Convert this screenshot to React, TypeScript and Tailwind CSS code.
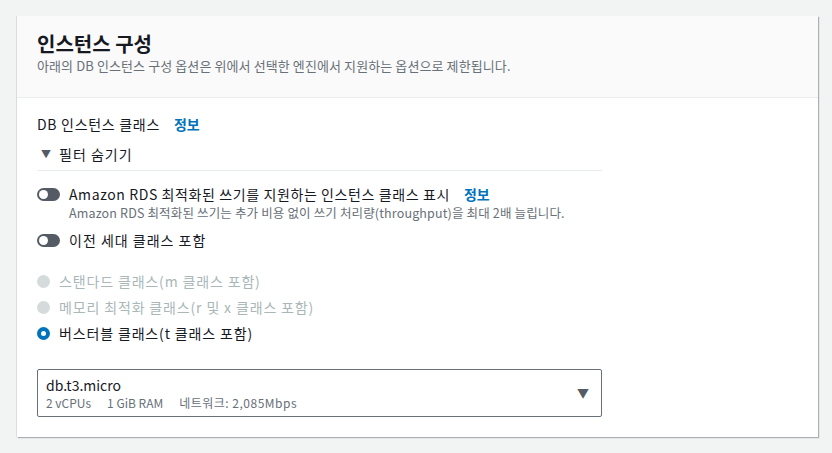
import { useState } from 'react';

const font = { fontFamily: '"Noto Sans CJK KR", "Noto Sans", sans-serif' };

function Toggle({ on }: { on: boolean }) {
  return (
    <span
      className={`relative inline-flex h-[13px] w-[23px] shrink-0 items-center rounded-full ${
        on ? 'bg-[#0073bb]' : 'bg-[#545b64]'
      }`}
    >
      <span
        className={`absolute top-[2px] h-[9px] w-[9px] rounded-full bg-white ${on ? 'left-[12px]' : 'left-[2px]'}`}
      />
    </span>
  );
}

function Radio({ checked, disabled }: { checked?: boolean; disabled?: boolean }) {
  if (disabled) return <span className="h-[13px] w-[13px] shrink-0 rounded-full bg-[#d5dbdb]" />;
  return (
    <span
      className={`flex h-[13px] w-[13px] shrink-0 items-center justify-center rounded-full ${
        checked ? 'bg-[#0073bb]' : 'border border-[#aab7b8] bg-white'
      }`}
    >
      {checked && <span className="h-[5px] w-[5px] rounded-full bg-white" />}
    </span>
  );
}

const radios = [
  { label: '스탠다드 클래스(m 클래스 포함)', disabled: true },
  { label: '메모리 최적화 클래스(r 및 x 클래스 포함)', disabled: true },
  { label: '버스터블 클래스(t 클래스 포함)', checked: true },
];

export default function App() {
  const [open] = useState(true);

  return (
    <div className="min-h-[453px] w-[832px] bg-[#f2f3f3] pt-4 pl-[17px]" style={font}>
      <div className="w-[801px] bg-white shadow-[1px_1px_1px_0_rgba(0,28,36,0.3),-1px_0_0_0_rgba(0,28,36,0.1)]">
        <div className="h-[82px] border-b border-[#eaeded] bg-[#fafafa] px-5 pt-[15px]">
          <h2 className="text-[20px] font-bold leading-[26px] text-[#16191f]">인스턴스 구성</h2>
          <p className="text-[13px] leading-[18px] tracking-[0.1px] text-[#687078]">
            아래의 DB 인스턴스 구성 옵션은 위에서 선택한 엔진에서 지원하는 옵션으로 제한됩니다.
          </p>
        </div>

        <div className="px-5 pt-[16px] pb-[20px]">
          <div className="flex items-center gap-[14px] text-[14px] leading-[20px] text-[#16191f]">
            <span className="tracking-[0.7px]">DB 인스턴스 클래스</span>
            <span className="font-bold text-[#0073bb]">정보</span>
          </div>

          <div className="mt-[10px] w-[565px] border-b border-[#eaeded] pb-[6px]">
            <div className="flex items-center gap-2 pl-[4px] text-[14px] leading-[20px] text-[#16191f]">
              <span className="text-[10px] text-[#545b64]">▼</span>
              <span className="tracking-[1px]">필터 숨기기</span>
            </div>
          </div>

          {open && (
            <div className="mt-[13px]">
              <div className="flex items-start gap-[9px]">
                <span className="flex h-[20px] items-center">
                  <Toggle on={false} />
                </span>
                <div>
                  <div className="flex items-center gap-[14px] text-[14px] leading-[20px] text-[#16191f]">
                    <span className="tracking-[0.6px]">Amazon RDS 최적화된 쓰기를 지원하는 인스턴스 클래스 표시</span>
                    <span className="font-bold text-[#0073bb]">정보</span>
                  </div>
                  <p className="text-[12.5px] leading-[17px] tracking-[0.15px] text-[#687078]">
                    Amazon RDS 최적화된 쓰기는 추가 비용 없이 쓰기 처리량(throughput)을 최대 2배 늘립니다.
                  </p>
                </div>
              </div>

              <div className="mt-[9px] flex items-center gap-[9px] text-[14px] leading-[20px] text-[#16191f]">
                <Toggle on={false} />
                <span className="tracking-[1px]">이전 세대 클래스 포함</span>
              </div>

              <div className="mt-[21px] flex flex-col gap-[6px]">
                {radios.map((r) => (
                  <div key={r.label} className="flex items-center gap-[9px] text-[14px] leading-[20px]">
                    <Radio checked={r.checked} disabled={r.disabled} />
                    <span className={`tracking-[0.85px] ${r.disabled ? 'text-[#aab7b8]' : 'text-[#16191f]'}`}>
                      {r.label}
                    </span>
                  </div>
                ))}
              </div>

              <div className="mt-[26px] flex h-[48px] w-[565px] items-center justify-between rounded-[2px] border border-[#687078] px-[8px]">
                <div>
                  <div className="text-[14px] leading-[19px] text-[#16191f]">db.t3.micro</div>
                  <div className="flex gap-[16px] text-[12px] leading-[16px] text-[#687078]">
                    <span>2 vCPUs</span>
                    <span>1 GiB RAM</span>
                    <span className="tracking-[0.5px]">네트워크: 2,085Mbps</span>
                  </div>
                </div>
                <span className="mr-[4px] text-[12px] text-[#545b64]">▼</span>
              </div>
            </div>
          )}
        </div>
      </div>
    </div>
  );
}
